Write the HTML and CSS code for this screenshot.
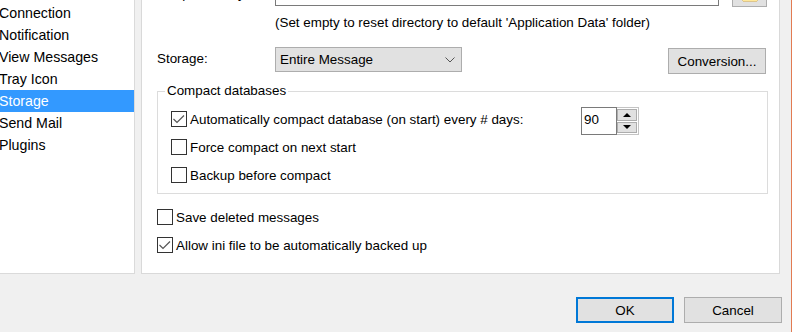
FILE: index.html
```html
<!doctype html>
<html lang="en">
  <head>
    <meta charset="UTF-8" />
    <title>Options - Storage</title>
    <link rel="stylesheet" href="styles.css">
  </head>
  <body>
    <div class="dialog">
      <div class="main">
        <ul class="nav">
          <li>General</li>
          <li>Connection</li>
          <li>Notification</li>
          <li>View Messages</li>
          <li>Tray Icon</li>
          <li class="selected">Storage</li>
          <li>Send Mail</li>
          <li>Plugins</li>
        </ul>

        <div class="page">
          <div class="row">
            <span class="label">Temp directory:</span>
            <div class="textbox"></div>
            <button class="btn browse">
              <svg width="16" height="16" viewBox="0 0 16 16">
                <path d="M1 3h5l1.5 1.5H15V14H1z" fill="#f8d775" stroke="#d9a93a" stroke-width="1"/>
                <path d="M1 6h14v8H1z" fill="#ffe89a"/>
              </svg>
            </button>
          </div>
          <div class="hint">(Set empty to reset directory to default 'Application Data' folder)</div>

          <div class="row storage-row">
            <span class="label">Storage:</span>
            <div class="select">
              <span>Entire Message</span>
              <svg width="10" height="6" viewBox="0 0 10 6">
                <polyline points="0.5,0.5 5,5 9.5,0.5" fill="none" stroke="#555" stroke-width="1"/>
              </svg>
            </div>
            <button class="btn conversion">Conversion...</button>
          </div>

          <fieldset class="group">
            <legend>Compact databases</legend>
            <div class="check">
              <svg class="box" width="16" height="16" viewBox="0 0 16 16">
                <rect x="0.5" y="0.5" width="15" height="15" fill="#fff" stroke="#333"/>
                <polyline points="2.5,8 6,11.5 13,4.5" fill="none" stroke="#555" stroke-width="1.2"/>
              </svg>
              <span class="days-label">Automatically compact database (on start) every # days:</span>
              <div class="spin">
                <div class="spin-field">90</div>
                <div class="spin-buttons">
                  <div class="spin-btn"><span class="tri-up"></span></div>
                  <div class="spin-btn"><span class="tri-down"></span></div>
                </div>
              </div>
            </div>
            <div class="check">
              <svg class="box" width="16" height="16" viewBox="0 0 16 16">
                <rect x="0.5" y="0.5" width="15" height="15" fill="#fff" stroke="#333"/>
              </svg>
              <span>Force compact on next start</span>
            </div>
            <div class="check">
              <svg class="box" width="16" height="16" viewBox="0 0 16 16">
                <rect x="0.5" y="0.5" width="15" height="15" fill="#fff" stroke="#333"/>
              </svg>
              <span>Backup before compact</span>
            </div>
          </fieldset>

          <div class="check outer first">
            <svg class="box" width="16" height="16" viewBox="0 0 16 16">
              <rect x="0.5" y="0.5" width="15" height="15" fill="#fff" stroke="#333"/>
            </svg>
            <span>Save deleted messages</span>
          </div>
          <div class="check outer">
            <svg class="box" width="16" height="16" viewBox="0 0 16 16">
              <rect x="0.5" y="0.5" width="15" height="15" fill="#fff" stroke="#333"/>
              <polyline points="2.5,8 6,11.5 13,4.5" fill="none" stroke="#555" stroke-width="1.2"/>
            </svg>
            <span>Allow ini file to be automatically backed up</span>
          </div>
        </div>
      </div>

      <div class="footer">
        <button class="btn default">OK</button>
        <button class="btn">Cancel</button>
      </div>
    </div>
  </body>
</html>
```

FILE: styles.css
```css
body {
  margin: 0;
  background-color: #f0f0f0;
  font-family: "Liberation Sans", Arial, sans-serif;
  font-size: 13.4px;
  color: #000000;
  overflow: hidden;
}
.dialog {
  width: 791px;
  height: 332px;
  border-right: 1px solid #e27b52;
  display: flex;
  flex-direction: column;
}
.main {
  display: flex;
  flex: none;
  margin: -21px 11px 0 -6px;
}
.nav {
  width: 141px;
  box-sizing: border-box;
  flex: none;
  margin: 0;
  padding: 0 0 0 4px;
  list-style: none;
  background-color: #ffffff;
  border: 1px solid #dadada;
  font-size: 14.2px;
}
.nav li {
  height: 22px;
  line-height: 22px;
  white-space: nowrap;
}
.nav li.selected {
  background-color: #3399ff;
  color: #ffffff;
}
.page {
  flex: 1;
  margin-left: 6px;
  background-color: #ffffff;
  border: 1px solid #d9d9d9;
  padding: 2px 11px 14px 15px;
}
.row {
  display: flex;
  align-items: flex-start;
}
.label {
  width: 118px;
  flex: none;
  line-height: 24px;
}
.textbox {
  width: 444px;
  height: 24px;
  box-sizing: border-box;
  border: 1px solid #7a7a7a;
  background-color: #ffffff;
}
.btn {
  font: inherit;
  line-height: normal;
  color: #000000;
  width: 98px;
  height: 25px;
  padding: 0;
  background-color: #e1e1e1;
  border: 1px solid #adadad;
}
.browse {
  width: 35px;
  margin-left: 13px;
  display: flex;
  align-items: center;
  justify-content: center;
}
.hint {
  margin: 6px 0 0 118px;
  line-height: 20px;
}
.storage-row {
  margin-top: 14px;
}
.select {
  width: 187px;
  height: 25px;
  box-sizing: border-box;
  border: 1px solid #adadad;
  background-color: #e1e1e1;
  display: flex;
  align-items: center;
  justify-content: space-between;
  padding: 0 6px 0 4px;
}
.conversion {
  margin: 1px 2px 0 auto;
  height: 26px;
}
.group {
  margin: 7px 0 0;
  padding: 4px 0 4px 7px;
  border: 1px solid #dcdcdc;
}
.group legend {
  padding: 0 2px;
  line-height: 20px;
}
.check {
  display: flex;
  align-items: center;
  gap: 3px;
  height: 28px;
  margin-left: 6px;
  white-space: nowrap;
}
.check.outer {
  margin-left: 0;
}
.check.first {
  margin-top: 9px;
}
.box {
  flex: none;
}
.days-label {
  width: 388px;
  flex: none;
}
.spin {
  display: flex;
  height: 28px;
  align-self: flex-start;
  margin-top: 2px;
}
.spin-field {
  width: 36px;
  box-sizing: border-box;
  border: 1px solid #7a7a7a;
  padding-left: 2px;
  line-height: 24px;
}
.spin-buttons {
  width: 22px;
  box-sizing: border-box;
  border: 1px solid #c4c4c4;
  border-left: none;
  padding: 1px 1px 1px 0;
  display: flex;
  flex-direction: column;
  gap: 1px;
}
.spin-btn {
  flex: 1;
  background-color: #e1e1e1;
  border: 1px solid #adadad;
  display: flex;
  align-items: center;
  justify-content: center;
}
.tri-up {
  border-left: 4px solid transparent;
  border-right: 4px solid transparent;
  border-bottom: 4px solid #000000;
}
.tri-down {
  border-left: 4px solid transparent;
  border-right: 4px solid transparent;
  border-top: 4px solid #000000;
}
.footer {
  display: flex;
  flex: none;
  align-items: flex-start;
  justify-content: flex-end;
  gap: 10px;
  padding: 23px 9px 0 0;
}
.footer .btn {
  height: 26px;
}
.btn.default {
  border: 2px solid #0078d7;
}
```
